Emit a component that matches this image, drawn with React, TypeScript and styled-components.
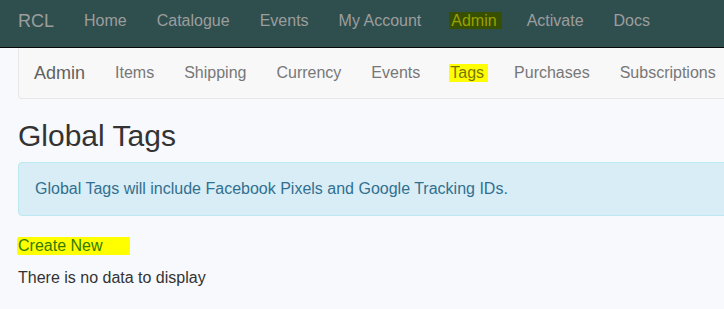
import React from "react";
import styled, { createGlobalStyle } from "styled-components";

const GlobalStyle = createGlobalStyle`
  html, body {
    margin: 0;
    padding: 0;
    background: #f7f9fd;
    overflow: hidden;
  }
  body {
    font-family: "Liberation Sans", Arial, Helvetica, sans-serif;
    font-size: 16px;
    line-height: 22px;
    color: #333;
  }
  * { box-sizing: border-box; }
`;

const TopBar = styled.nav`
  display: flex;
  align-items: center;
  height: 48px;
  padding: 0 0 5px 3px;
  background: #2f4f4f;
  border-bottom: 1px solid #080808;
  white-space: nowrap;
`;

const TopBrand = styled.span`
  padding: 0 15px;
  font-size: 18px;
  color: #9d9d9d;
`;

const TopLink = styled.span`
  padding: 0 15px;
  font-size: 16px;
  color: #9d9d9d;
`;

const DarkMark = styled.span`
  display: inline-block;
  margin: 0 -5px 0 -2px;
  padding: 0 5px 0 2px;
  line-height: 17px;
  background: #364f02;
  color: #9ba000;
`;

const Content = styled.main`
  padding-left: 18px;
  margin-right: -20px;
`;

const SubNav = styled.nav`
  display: flex;
  align-items: center;
  height: 51px;
  width: max-content;
  background: #f8f8f8;
  border: 1px solid #e7e7e7;
  border-top: 0;
  border-radius: 0 0 4px 4px;
  white-space: nowrap;
`;

const SubBrand = styled.span`
  padding: 0 15px;
  font-size: 18px;
  color: #606060;
`;

const SubLink = styled.span`
  padding: 0 15px;
  font-size: 16px;
  color: #777;
`;

const YellowMark = styled.span`
  display: inline-block;
  margin: 0 -4px 0 -1px;
  padding: 0 4px 0 1px;
  line-height: 18px;
  background: #ffff00;
  color: #777700;
`;

const Heading = styled.h1`
  margin: 20px 0 10px;
  font-size: 30px;
  font-weight: 400;
  line-height: 33px;
  color: #333;
`;

const Alert = styled.div`
  padding: 15px 16px;
  line-height: 22px;
  background: #d9edf7;
  border: 1px solid #bce8f1;
  border-radius: 4px;
  color: #31708f;
  margin-bottom: 19px;
`;

const LinkLine = styled.p`
  margin: 0 0 10px;
`;

const CreateLink = styled.span`
  display: inline-block;
  margin-left: -1px;
  padding: 0 28px 0 1px;
  line-height: 18px;
  background: #ffff00;
  color: #337a00;
  border-radius: 2px 0 0 2px;
`;

const Empty = styled.p`
  margin: 0;
  color: #333;
`;

const topLinks = ["Home", "Catalogue", "Events", "My Account", "Admin", "Activate", "Docs"];
const subLinks = ["Items", "Shipping", "Currency", "Events", "Tags", "Purchases", "Subscriptions"];

export default function App() {
  return (
    <>
      <GlobalStyle />
      <TopBar>
        <TopBrand>RCL</TopBrand>
        {topLinks.map((l) => (
          <TopLink key={l}>{l === "Admin" ? <DarkMark>{l}</DarkMark> : l}</TopLink>
        ))}
      </TopBar>
      <Content>
        <SubNav>
          <SubBrand>Admin</SubBrand>
          {subLinks.map((l) => (
            <SubLink key={l}>{l === "Tags" ? <YellowMark>{l}</YellowMark> : l}</SubLink>
          ))}
        </SubNav>
        <Heading>Global Tags</Heading>
        <Alert>Global Tags will include Facebook Pixels and Google Tracking IDs.</Alert>
        <LinkLine>
          <CreateLink>Create New</CreateLink>
        </LinkLine>
        <Empty>There is no data to display</Empty>
      </Content>
    </>
  );
}
